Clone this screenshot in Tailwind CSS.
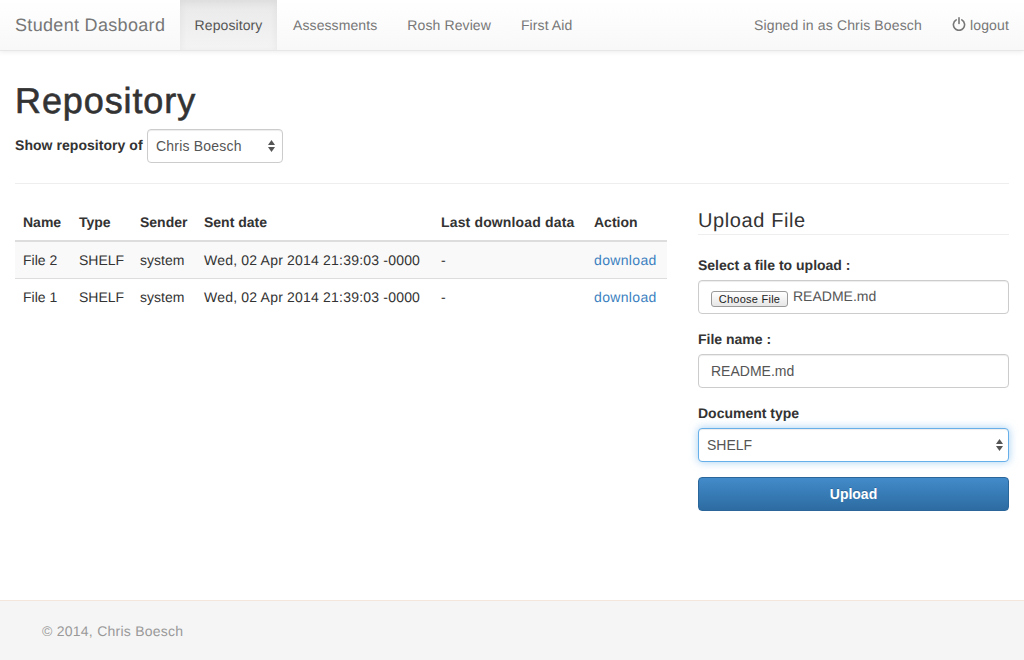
<!doctype html>
<html lang="en">
<head>
  <meta charset="UTF-8" />
  <meta name="viewport" content="width=device-width, initial-scale=1.0" />
  <script src="https://cdn.jsdelivr.net/npm/@tailwindcss/browser@4"></script>
  <title>Student Dasboard</title>
</head>
<body class="bg-white font-['Liberation_Sans',Arial,sans-serif] text-[14px] leading-[20px] text-[#333] [text-rendering:geometricPrecision]">
  <div class="h-[660px] w-[1024px] overflow-hidden flex flex-col">
    <!-- navbar -->
    <nav class="h-[51px] shrink-0 flex items-stretch justify-between pl-[15px] pr-0 bg-gradient-to-b from-white to-[#f8f8f8] border-b border-[#e7e7e7] shadow-[0_1px_5px_rgba(0,0,0,0.08)] text-[#777]">
      <div class="flex items-stretch">
        <a href="#" class="flex items-center w-[165px] text-[18px] tracking-[0.32px] whitespace-nowrap">Student Dasboard</a>
        <ul class="flex items-stretch tracking-[0.1px]">
          <li class="flex items-center w-[97px] justify-center text-[#555] bg-gradient-to-b from-[#e9e9e9] to-[#f4f4f4] shadow-[inset_0_3px_9px_rgba(0,0,0,0.06)]"><a href="#">Repository</a></li>
          <li class="flex items-center pl-[16px] pr-[15px]"><a href="#">Assessments</a></li>
          <li class="flex items-center px-[15px]"><a href="#">Rosh Review</a></li>
          <li class="flex items-center px-[15px]"><a href="#">First Aid</a></li>
        </ul>
      </div>
      <ul class="flex items-stretch">
        <li class="flex items-center px-[15px] tracking-[0.15px] whitespace-nowrap">Signed in as Chris Boesch</li>
        <li class="flex items-center px-[15px]">
          <a href="#" class="flex items-center gap-[4px]">
            <svg class="w-[14px] h-[14px] mb-[2px]" viewBox="0 0 14 14" fill="none" stroke="#777" stroke-width="1.6" stroke-linecap="round">
              <path d="M4.2 2.9a5.6 5.6 0 1 0 5.6 0" />
              <path d="M7 0.9v5.6" />
            </svg>
            <span class="tracking-[0.15px]">logout</span>
          </a>
        </li>
      </ul>
    </nav>

    <main class="flex-1 px-[15px]">
      <h1 class="mt-[30px] text-[36px] leading-[40px] font-medium text-[#333] tracking-[0.9px] [-webkit-text-stroke:0.6px_#333]">Repository</h1>
      <form class="mt-[8px] flex items-center gap-[4px] h-[34px]">
        <label class="font-bold mb-[2px] w-[128px] whitespace-nowrap tracking-[0.05px]">Show repository of</label>
        <div class="relative w-[136px]">
          <select class="appearance-none w-full h-[34px] pl-[8px] pr-[20px] rounded-[4px] border border-[#ccc] bg-white text-[#555] tracking-[0.2px] shadow-[inset_0_1px_1px_rgba(0,0,0,0.075)]">
            <option>Chris Boesch</option>
          </select>
          <svg class="absolute right-[8px] top-[11px] w-[7px] h-[12px] pointer-events-none" viewBox="0 0 7 12" fill="#555"><path d="M3.5 0 7 5H0z" /><path d="M0 7h7l-3.5 5z" /></svg>
        </div>
      </form>
      <hr class="mt-[20px] border-t border-[#eee]" />

      <div class="mt-[19px] flex items-start">
        <!-- files table -->
        <table class="table-fixed w-[652px] border-collapse">
          <colgroup>
            <col class="w-[56px]" /><col class="w-[61px]" /><col class="w-[64px]" /><col class="w-[237px]" /><col class="w-[153px]" /><col class="w-[81px]" />
          </colgroup>
          <thead>
            <tr class="border-b-2 border-[#ddd] text-left">
              <th class="p-[8px] h-[38px] font-bold">Name</th>
              <th class="p-[8px] font-bold">Type</th>
              <th class="p-[8px] font-bold">Sender</th>
              <th class="p-[8px] font-bold">Sent date</th>
              <th class="p-[8px] font-bold whitespace-nowrap tracking-[0.15px]">Last download data</th>
              <th class="p-[8px] font-bold">Action</th>
            </tr>
          </thead>
          <tbody>
            <tr class="bg-[#f9f9f9] border-b border-[#ddd]">
              <td class="p-[8px] h-[37px]">File 2</td>
              <td class="p-[8px]">SHELF</td>
              <td class="p-[8px]">system</td>
              <td class="p-[8px] whitespace-nowrap tracking-[0.2px]">Wed, 02 Apr 2014 21:39:03 -0000</td>
              <td class="p-[8px]">-</td>
              <td class="p-[8px]"><a href="#" class="text-[#3b7fc0] tracking-[0.35px]">download</a></td>
            </tr>
            <tr>
              <td class="p-[8px] h-[37px]">File 1</td>
              <td class="p-[8px]">SHELF</td>
              <td class="p-[8px]">system</td>
              <td class="p-[8px] whitespace-nowrap tracking-[0.2px]">Wed, 02 Apr 2014 21:39:03 -0000</td>
              <td class="p-[8px]">-</td>
              <td class="p-[8px]"><a href="#" class="text-[#3b7fc0] tracking-[0.35px]">download</a></td>
            </tr>
          </tbody>
        </table>

        <!-- upload form -->
        <form class="ml-[31px] w-[311px]">
          <h3 class="text-[20px] leading-[22px] font-medium pb-[2px] border-b border-[#eee] mt-[7px] tracking-[0.6px]">Upload File</h3>
          <label class="block mt-[20px] mb-[5px] font-bold">Select a file to upload :</label>
          <div class="h-[34px] flex items-start gap-[5px] pl-[12px] pt-[5px] rounded-[4px] border border-[#ccc] text-[#555] shadow-[inset_0_1px_1px_rgba(0,0,0,0.075)]">
            <button type="button" class="mt-[5px] h-[16px] w-[77px] rounded-[3px] border border-[#999] bg-gradient-to-b from-white to-[#e6e6e6] text-[11px] leading-[14px] text-[#222] tracking-[0.25px]">Choose File</button>
            <span class="leading-[20px]">README.md</span>
          </div>
          <label class="block mt-[15px] mb-[5px] font-bold">File name :</label>
          <input type="text" value="README.md" class="block w-full h-[34px] px-[12px] rounded-[4px] border border-[#ccc] text-[#555] shadow-[inset_0_1px_1px_rgba(0,0,0,0.075)]" />
          <label class="block mt-[15px] mb-[5px] font-bold">Document type</label>
          <div class="relative">
            <select class="appearance-none block w-full h-[34px] pl-[8px] pr-[20px] rounded-[4px] border border-[#66afe9] bg-white text-[#555] shadow-[inset_0_1px_1px_rgba(0,0,0,0.075),0_0_8px_rgba(102,175,233,0.6)]">
              <option>SHELF</option>
            </select>
            <svg class="absolute right-[6px] top-[11px] w-[7px] h-[12px] pointer-events-none" viewBox="0 0 7 12" fill="#555"><path d="M3.5 0 7 5H0z" /><path d="M0 7h7l-3.5 5z" /></svg>
          </div>
          <button type="button" class="block mt-[15px] w-full h-[34px] rounded-[4px] border border-[#2b669a] bg-gradient-to-b from-[#428bca] to-[#2d6ca2] text-white font-bold [text-shadow:0_-1px_0_rgba(0,0,0,0.2)]">Upload</button>
        </form>
      </div>
    </main>

    <footer class="h-[60px] shrink-0 flex items-center pl-[42px] bg-[#f5f5f5] border-t border-[#f5e6dc] text-[#999] tracking-[0.25px]">© 2014, Chris Boesch</footer>
  </div>
</body>
</html>
